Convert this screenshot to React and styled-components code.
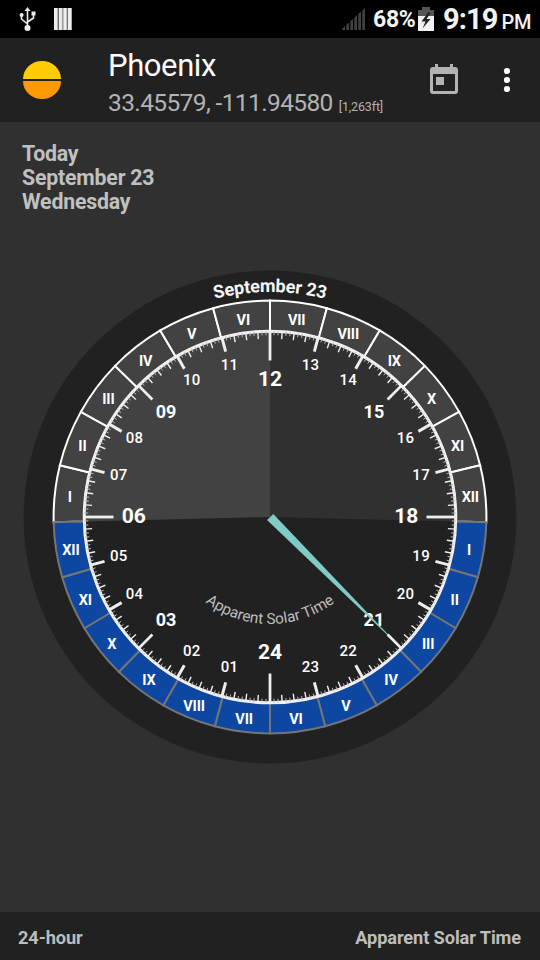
import React from "react";
import styled, { createGlobalStyle } from "styled-components";

const GlobalStyle = createGlobalStyle`
  html, body { margin: 0; background: #303030; }
  * { box-sizing: border-box; }
`;

const Screen = styled.div`
  width: 540px;
  height: 960px;
  display: flex;
  flex-direction: column;
  background: #303030;
  font-family: Roboto, "Noto Sans", sans-serif;
  overflow: hidden;
`;

const StatusBar = styled.header`
  height: 38px;
  flex: none;
  display: flex;
  align-items: center;
  justify-content: space-between;
  background: #000;
  padding: 0 9px 0 19px;
  color: #f2f2f2;
`;

const StatusGroup = styled.div`
  display: flex;
  align-items: center;
  gap: ${(p) => p.$gap || 0}px;
`;

const Battery = styled.span`
  width: 45px;
  margin-left: 7px;
  padding-top: 2px;
  font-size: 23px;
  font-weight: 700;
  letter-spacing: -0.3px;
  line-height: 38px;
  white-space: nowrap;
`;

const Clock = styled.span`
  width: 88px;
  margin-left: 9px;
  padding-top: 2px;
  font-size: 29px;
  font-weight: 700;
  letter-spacing: -0.9px;
  line-height: 38px;
  white-space: nowrap;
`;

const Meridiem = styled.span`
  margin-left: 4px;
  font-size: 20px;
  font-weight: 500;
  letter-spacing: -0.2px;
`;

const AppBar = styled.div`
  height: 84px;
  flex: none;
  display: flex;
  align-items: center;
  background: #212121;
  padding: 0 29px 0 22px;
`;

const Titles = styled.div`
  flex: 1;
  margin-left: 46px;
  padding-top: 11px;
`;

const City = styled.h1`
  margin: 0;
  color: #fff;
  font-size: 31px;
  font-weight: 400;
  letter-spacing: -0.4px;
  line-height: 38px;
`;

const Coordinates = styled.div`
  color: #b3b3b3;
  font-size: 24.5px;
  letter-spacing: -0.62px;
  line-height: 36px;
  white-space: nowrap;
`;

const Altitude = styled.span`
  margin-left: 6px;
  font-size: 12.5px;
  letter-spacing: -0.15px;
`;

const IconButton = styled.button`
  display: flex;
  padding: 0 0 ${(p) => p.$lift || 0}px;
  border: 0;
  background: none;
  margin-left: ${(p) => p.$gap || 0}px;
`;

const DateBlock = styled.section`
  flex: none;
  height: 100px;
  padding: 20px 22px 0;
  color: #c0c0c0;
  font-size: 21.3px;
  font-weight: 700;
  letter-spacing: -0.2px;
  line-height: 23.8px;
`;

const Main = styled.main`
  flex: 1;
  min-height: 0;
`;

const Dial = styled.svg`
  display: block;
  width: 540px;
  height: 590px;
`;

const Footer = styled.footer`
  height: 48px;
  flex: none;
  display: flex;
  align-items: center;
  justify-content: space-between;
  padding: 3px 19px 0 18px;
  background: #212121;
  color: #bdbdbd;
  font-size: 18.2px;
  font-weight: 700;
  letter-spacing: -0.1px;
`;

const CX = 270;
const CY = 517;
const RING_OUTER = 216.4;
const RING_INNER = 185.8;
const DAY_EDGE = 91.4;

// Angles run clockwise from the top of the dial.
const point = (angle, r) => {
  const a = (angle * Math.PI) / 180;
  return [CX + r * Math.sin(a), CY - r * Math.cos(a)];
};

const at = (angle, r) => point(angle, r).map((n) => n.toFixed(2)).join(" ");

const sector = (from, to, r) =>
  `M${CX} ${CY}L${at(from, r)}A${r} ${r} 0 ${to - from > 180 ? 1 : 0} 1 ${at(to, r)}Z`;

const cell = (from, to) =>
  `M${at(from, RING_INNER)}L${at(from, RING_OUTER)}A${RING_OUTER} ${RING_OUTER} 0 0 1 ${at(to, RING_OUTER)}` +
  `L${at(to, RING_INNER)}A${RING_INNER} ${RING_INNER} 0 0 0 ${at(from, RING_INNER)}Z`;

const ROMAN = ["I", "II", "III", "IV", "V", "VI", "VII", "VIII", "IX", "X", "XI", "XII"];
const DAY_STEP = (DAY_EDGE * 2) / 12;
const NIGHT_STEP = 30 - DAY_STEP;

function RomanCells({ start, step, fill, stroke }) {
  return ROMAN.map((label, i) => {
    const from = start + i * step;
    const [x, y] = point(from + step / 2, 201.5);
    return (
      <g key={label}>
        <path d={cell(from, from + step)} fill={fill} stroke={stroke} strokeWidth="2" />
        <text x={x} y={y + 7.3} fontSize="14.5" fontWeight="700" letterSpacing="-0.15" fill="#fff" textAnchor="middle">
          {label}
        </text>
      </g>
    );
  });
}

function Ticks() {
  return Array.from({ length: 288 }, (_, i) => {
    let inner = 181.8;
    let width = 1;
    let color = "#bbb";
    if (i % 72 === 0) [inner, width, color] = [156.5, 2.8, "#eee"];
    else if (i % 36 === 0) [inner, width, color] = [166.3, 2.8, "#eee"];
    else if (i % 12 === 0) [inner, width, color] = [171.3, 3, "#eee"];
    else if (i % 3 === 0) [inner, width, color] = [178.3, 1.4, "#eee"];
    const [x1, y1] = point(i * 1.25, inner);
    const [x2, y2] = point(i * 1.25, RING_INNER);
    return <line key={i} x1={x1} y1={y1} x2={x2} y2={y2} stroke={color} strokeWidth={width} />;
  });
}

function HourNumbers() {
  return Array.from({ length: 24 }, (_, i) => {
    const hour = i + 1;
    const cardinal = hour % 6 === 0;
    const diagonal = !cardinal && hour % 3 === 0;
    const size = cardinal ? 21 : diagonal ? 18 : 15;
    const r = cardinal ? 136.3 : diagonal ? 147 : 156.5;
    const [x, y] = point(180 + hour * 15, r);
    return (
      <text
        key={hour}
        x={x}
        y={y - (size === 15 ? 1.4 : 1.8) + size * 0.357}
        fontSize={size}
        fontWeight={size === 15 ? 500 : 700}
        letterSpacing={size === 15 ? 0.3 : 0}
        fill="#fff"
        textAnchor="middle"
      >
        {String(hour).padStart(2, "0")}
      </text>
    );
  });
}

function SolarDial() {
  return (
    <Dial viewBox="0 222 540 590">
      <defs>
        <path id="date-arc" d={`M${at(-60, 225)}A225 225 0 0 1 ${at(60, 225)}`} />
        <path id="mode-arc" d={`M${at(260, 107)}A107 107 0 0 0 ${at(100, 107)}`} />
      </defs>
      <circle cx={CX} cy={CY} r="246.4" fill="#212121" />
      <path d={sector(-DAY_EDGE, 0, RING_INNER)} fill="#424242" />
      <path d={sector(0, DAY_EDGE, RING_INNER)} fill="#303030" />
      <RomanCells start={-DAY_EDGE} step={DAY_STEP} fill="#424242" stroke="#fff" />
      <RomanCells start={DAY_EDGE} step={NIGHT_STEP} fill="#0d47a1" stroke="#757575" />
      <HourNumbers />
      <path d="M267 520L273.3 514L401.5 648.5Z" fill="#80cbc4" />
      <circle cx={CX} cy={CY} r={RING_INNER} fill="none" stroke="#f0f0f0" strokeWidth="3" />
      <Ticks />
      <text fontSize="18" fontWeight="700" letterSpacing="-0.2" fill="#f5f5f5" textAnchor="middle">
        <textPath href="#date-arc" startOffset="50%">September 23</textPath>
      </text>
      <text fontSize="15.3" fill="#bdbdbd" textAnchor="middle">
        <textPath href="#mode-arc" startOffset="50%">Apparent Solar Time</textPath>
      </text>
    </Dial>
  );
}

function SunIcon() {
  return (
    <svg width="40" height="40" viewBox="0 0 40 40">
      <path d="M1 19a19 18 0 0 1 38 0Z" fill="#ffcc00" />
      <path d="M1 21a19 18 0 0 0 38 0Z" fill="#ff9900" />
    </svg>
  );
}

function UsbIcon() {
  return (
    <svg width="18" height="26" viewBox="0 0 18 26" fill="none" stroke="#eee" strokeWidth="1.6">
      <path d="M8.5 4V22M2.5 9V13L8.5 18M14.5 8V12L8.5 16" />
      <path d="M8.5 1L11.5 5H5.5Z" fill="#eee" stroke="none" />
      <circle cx="8.5" cy="22" r="3" fill="#eee" stroke="none" />
      <circle cx="2.6" cy="9" r="2" fill="#eee" stroke="none" />
      <path d="M12.5 5.5h4v4h-4Z" fill="#eee" stroke="none" />
    </svg>
  );
}

function BarsIcon() {
  return (
    <svg width="18" height="22" viewBox="0 0 18 22">
      {[0, 4.6, 9.2, 13.8].map((x) => (
        <g key={x}>
          <rect x={x} width="4" height="22" fill="#eee" />
          <rect x={x + 3.2} width="0.9" height="22" fill="#aaa" />
        </g>
      ))}
    </svg>
  );
}

function SignalIcon() {
  return (
    <svg width="24" height="22" viewBox="0 0 24 22" fill="#404040">
      {[0, 1, 2, 3, 4, 5].map((i) => (
        <path key={i} d={`M${i * 4 + 0.3} 22V${20.5 - i * 3.6}L${i * 4 + 3} ${18 - i * 3.6}V22Z`} />
      ))}
    </svg>
  );
}

function BatteryIcon() {
  return (
    <svg width="16" height="24" viewBox="0 0 16 24">
      <path d="M0 3h4V0h8v3h4v6H0Z" fill="#555" />
      <path d="M0 9h16v15H0Z" fill="#f2f2f2" />
      <path d="M10.5 5L3.5 14.5H7.5L4.5 21.5L12.5 12H8.5L12.5 6Z" fill="#222" />
    </svg>
  );
}

function CalendarIcon() {
  return (
    <svg width="28" height="32" viewBox="0 0 28 32">
      <path d="M5 1h3v3h12V1h3v3h2a3 3 0 0 1 3 3v21a3 3 0 0 1-3 3H3a3 3 0 0 1-3-3V7a3 3 0 0 1 3-3h2ZM3 11v17h22V11Z" fill="#b3b3b3" fillRule="evenodd" />
      <path d="M6 14h8v8H6Z" fill="#b3b3b3" />
    </svg>
  );
}

function MoreIcon() {
  return (
    <svg width="8" height="26" viewBox="0 0 8 26" fill="#fff">
      {[4, 13, 22].map((y) => <circle key={y} cx="4" cy={y} r="3.1" />)}
    </svg>
  );
}

export default function App() {
  return (
    <Screen>
      <GlobalStyle />
      <StatusBar>
        <StatusGroup $gap={17}>
          <UsbIcon />
          <BarsIcon />
        </StatusGroup>
        <StatusGroup>
          <SignalIcon />
          <Battery>68%</Battery>
          <BatteryIcon />
          <Clock>9:19<Meridiem>PM</Meridiem></Clock>
        </StatusGroup>
      </StatusBar>
      <AppBar>
        <SunIcon />
        <Titles>
          <City>Phoenix</City>
          <Coordinates>33.45579, -111.94580<Altitude>[1,263ft]</Altitude></Coordinates>
        </Titles>
        <IconButton aria-label="Calendar" $lift={2}><CalendarIcon /></IconButton>
        <IconButton aria-label="More" $gap={45}><MoreIcon /></IconButton>
      </AppBar>
      <DateBlock>
        <div>Today</div>
        <div>September 23</div>
        <div>Wednesday</div>
      </DateBlock>
      <Main>
        <SolarDial />
      </Main>
      <Footer>
        <span>24-hour</span>
        <span>Apparent Solar Time</span>
      </Footer>
    </Screen>
  );
}
